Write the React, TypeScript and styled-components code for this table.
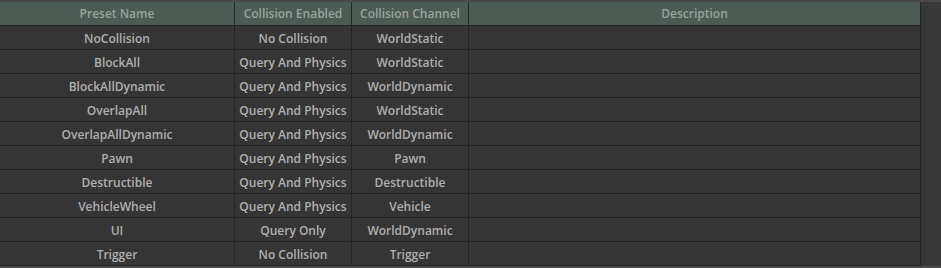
import React from "react";
import styled, { createGlobalStyle } from "styled-components";

const Global = createGlobalStyle`
  html, body { margin: 0; padding: 0; background: #4b4b4b; }
  body { width: 941px; height: 268px; overflow: hidden; }
`;

const Page = styled.div`
  display: flex;
  width: 941px;
  height: 268px;
  padding: 2px 0;
  box-sizing: border-box;
  background: #4b4b4b;
`;

const Table = styled.div`
  width: 921px;
  display: grid;
  grid-template-columns: 235px 117px 117px 452px;
  grid-auto-rows: 24px;
  background: #353535;
  font-family: "Open Sans", "Noto Sans", sans-serif;
  font-weight: 600;
  font-size: 12px;
`;

const SidePanel = styled.div`
  flex: 1;
  background: #383838;
`;

const Cell = styled.div<{ $header?: boolean }>`
  display: flex;
  align-items: center;
  justify-content: center;
  box-sizing: border-box;
  border-right: 1px solid #242424;
  border-bottom: 1px solid #242424;
  background: ${(p) => (p.$header ? "#4c5b53" : "#353535")};
  color: ${(p) => (p.$header ? "#9ba29e" : "#b0b0b0")};
  white-space: nowrap;
  padding-top: ${(p) => (p.$header ? "0" : "1px")};
`;

const headers = ["Preset Name", "Collision Enabled", "Collision Channel", "Description"];

const rows: [string, string, string][] = [
  ["NoCollision", "No Collision", "WorldStatic"],
  ["BlockAll", "Query And Physics", "WorldStatic"],
  ["BlockAllDynamic", "Query And Physics", "WorldDynamic"],
  ["OverlapAll", "Query And Physics", "WorldStatic"],
  ["OverlapAllDynamic", "Query And Physics", "WorldDynamic"],
  ["Pawn", "Query And Physics", "Pawn"],
  ["Destructible", "Query And Physics", "Destructible"],
  ["VehicleWheel", "Query And Physics", "Vehicle"],
  ["UI", "Query Only", "WorldDynamic"],
  ["Trigger", "No Collision", "Trigger"],
];

export default function App() {
  return (
    <>
      <Global />
      <Page>
        <Table>
          {headers.map((h) => (
            <Cell key={h} $header>
              {h}
            </Cell>
          ))}
          {rows.map((r) => (
            <React.Fragment key={r[0]}>
              <Cell>{r[0]}</Cell>
              <Cell>{r[1]}</Cell>
              <Cell>{r[2]}</Cell>
              <Cell />
            </React.Fragment>
          ))}
        </Table>
        <SidePanel />
      </Page>
    </>
  );
}
